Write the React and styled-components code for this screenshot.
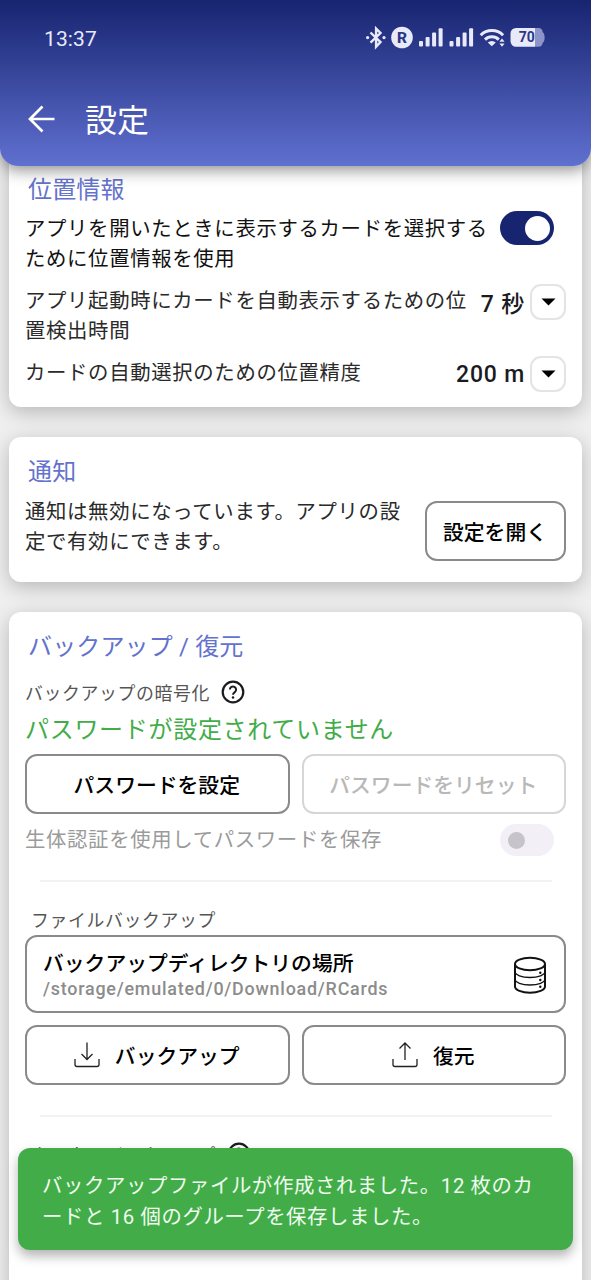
import styled, { createGlobalStyle, css } from "styled-components";

const App = () => {
  return (
    <Screen>
      <GlobalStyle />
      <Header>
        <StatusBar>
          <Clock>13:37</Clock>
          <StatusIcons />
        </StatusBar>
        <TitleBar>
          <BackArrow />
          <h1>設定</h1>
        </TitleBar>
      </Header>

      <Content>
        <Card>
          <Heading>位置情報</Heading>
          <Row $top={6}>
            <Text $strong>
              アプリを開いたときに表示するカードを選択するために位置情報を使用
            </Text>
            <Toggle $on />
          </Row>
          <Row $top={12}>
            <Text>
              アプリ起動時にカードを自動表示するための位置検出時間
            </Text>
            <Select value="7 秒" />
          </Row>
          <Row $top={12}>
            <Text>カードの自動選択のための位置精度</Text>
            <Select value="200 m" />
          </Row>
        </Card>

        <Card>
          <Heading>通知</Heading>
          <Row $top={7}>
            <Text>
              通知は無効になっています。アプリの設定で有効にできます。
            </Text>
            <OpenButton>設定を開く</OpenButton>
          </Row>
        </Card>

        <Card $last>
          <Heading>バックアップ / 復元</Heading>
          <Label $top={15}>
            バックアップの暗号化
            <HelpIcon />
          </Label>
          <Status>パスワードが設定されていません</Status>
          <ButtonRow $top={6}>
            <Button>パスワードを設定</Button>
            <Button disabled>パスワードをリセット</Button>
          </ButtonRow>
          <Row $top={10}>
            <Text $muted>生体認証を使用してパスワードを保存</Text>
            <Toggle />
          </Row>
          <Divider $top={24} />
          <Label $top={25} $indent>
            ファイルバックアップ
          </Label>
          <Directory>
            <div>
              <DirectoryTitle>バックアップディレクトリの場所</DirectoryTitle>
              <DirectoryPath>/storage/emulated/0/Download/RCards</DirectoryPath>
            </div>
            <DatabaseIcon />
          </Directory>
          <ButtonRow $top={12}>
            <Button>
              <DownloadIcon />
              バックアップ
            </Button>
            <Button>
              <UploadIcon />
              復元
            </Button>
          </ButtonRow>
          <Divider $top={30} />
          <Label $top={25} $indent>
            クラウドバックアップ
            <HelpIcon />
          </Label>
        </Card>
      </Content>

      <Toast>
        バックアップファイルが作成されました。12 枚のカードと 16
        個のグループを保存しました。
      </Toast>
    </Screen>
  );
};

const Toggle = ({ $on }) => (
  <Track $on={$on}>
    <Knob $on={$on} />
  </Track>
);

const Select = ({ value }) => (
  <SelectWrap>
    <span>{value}</span>
    <Caret>
      <svg width="15" height="8" viewBox="0 0 15 8">
        <path d="M0.5 0.5h14L7.5 7.5z" fill="#000" />
      </svg>
    </Caret>
  </SelectWrap>
);

const StatusIcons = () => (
  <svg width="180" height="24" viewBox="365 26 180 24" fill="#e8eafa">
    {/* bluetooth */}
    <path
      d="M370.5 32.5l10 9.6-4.4 4.6V28.6l4.4 4.4-10 9.6"
      fill="none"
      stroke="#e8eafa"
      strokeWidth="2.4"
    />
    <circle cx="367.6" cy="37.6" r="1.6" />
    <circle cx="384" cy="37.6" r="1.6" />
    {/* registered badge */}
    <circle cx="402" cy="37.5" r="10.8" />
    <text
      x="402"
      y="43"
      textAnchor="middle"
      fontFamily="Roboto"
      fontWeight="800"
      fontSize="15.5"
      fill="#2b3784"
    >
      R
    </text>
    {/* signal bars */}
    {[419, 449.5].map((x) => (
      <g key={x}>
        <rect x={x} y="41" width="4" height="5.5" rx="1" />
        <rect x={x + 6.6} y="37" width="4" height="9.5" rx="1" />
        <rect x={x + 13.1} y="32.5" width="4" height="14" rx="1" />
        <rect x={x + 19.6} y="28.3" width="4" height="18.2" rx="1" />
      </g>
    ))}
    {/* wifi */}
    <g fill="none" stroke="#e8eafa" strokeWidth="3">
      <path d="M480.7 35.2a15.8 15.8 0 0 1 22.4 0" />
      <path d="M485 39.6a9.8 9.8 0 0 1 13.8 0" />
    </g>
    <path d="M487.8 42.6a5.8 5.8 0 0 1 8 0l-4 3.7z" />
    <path d="M502 38.4l2.6 3.4h-5.2zM502 46.8l2.6-3.4h-5.2z" />
    {/* battery */}
    <path
      d="M535 28h3.5a4.5 4.5 0 0 1 4.2 4.2c2.6 1.4 2.6 9.2 0 10.6a4.5 4.5 0 0 1-4.2 4H535z"
      fill="#8c94ca"
    />
    <path d="M516 28h19v18.8h-19a5.5 5.5 0 0 1-5.5-5.5v-7.8a5.5 5.5 0 0 1 5.5-5.5z" />
    <text
      x="526.8"
      y="42.4"
      textAnchor="middle"
      fontFamily="Roboto"
      fontWeight="700"
      fontSize="14"
      fill="#2b3784"
    >
      70
    </text>
  </svg>
);

const BackArrow = () => (
  <svg width="30" height="30" viewBox="0 0 30 30">
    <path
      d="M27.5 15H3M15.5 2.5L3 15l12.5 12.5"
      fill="none"
      stroke="#fff"
      strokeWidth="2.7"
    />
  </svg>
);

const HelpIcon = () => (
  <HelpSvg width="24" height="24" viewBox="0 0 24 24">
    <circle cx="12" cy="12" r="10.3" fill="none" stroke="#1b1b1f" strokeWidth="2.2" />
    <path
      d="M8.9 9.6a3.1 3.1 0 1 1 4.9 2.5c-1.1.8-1.8 1.4-1.8 2.7"
      fill="none"
      stroke="#1b1b1f"
      strokeWidth="2"
    />
    <circle cx="12" cy="17.4" r="1.25" fill="#1b1b1f" />
  </HelpSvg>
);

const DatabaseIcon = () => (
  <svg width="34" height="38" viewBox="0 0 34 38" fill="none" stroke="#111">
    <ellipse cx="17" cy="8" rx="15" ry="6.2" strokeWidth="2" />
    <path d="M2 8v22.5c0 3.5 6.7 6.2 15 6.2s15-2.7 15-6.2V8" strokeWidth="2" />
    <path
      d="M2 15.5c0 3.4 6.7 6 15 6s15-2.6 15-6M2 23c0 3.4 6.7 6 15 6s15-2.6 15-6"
      strokeWidth="1.3"
    />
    <g fill="#111" stroke="none">
      <circle cx="27.3" cy="16.8" r="1.2" />
      <circle cx="27.3" cy="24" r="1.2" />
      <circle cx="27.3" cy="30.8" r="1.2" />
    </g>
  </svg>
);

const DownloadIcon = () => (
  <svg width="26" height="26" viewBox="0 0 26 26" fill="none" stroke="#222" strokeWidth="1.3">
    <path d="M13 0.5v17M7.5 12l5.5 5.5 5.5-5.5" />
    <path d="M1 17v5.5a2 2 0 0 0 2 2h20a2 2 0 0 0 2-2V17" />
  </svg>
);

const UploadIcon = () => (
  <svg width="26" height="26" viewBox="0 0 26 26" fill="none" stroke="#222" strokeWidth="1.3">
    <path d="M13 18V1M7.5 6.5L13 1l5.5 5.5" />
    <path d="M1 17v5.5a2 2 0 0 0 2 2h20a2 2 0 0 0 2-2V17" />
  </svg>
);

const GlobalStyle = createGlobalStyle`
  * {
    box-sizing: border-box;
  }
  body {
    margin: 0;
    background: #efefef;
    font-family: Roboto, "Noto Sans CJK JP", sans-serif;
    overflow: hidden;
  }
`;

const Screen = styled.div`
  position: relative;
  height: 1280px;
  overflow: hidden;
  display: flex;
  flex-direction: column;
`;

const Header = styled.header`
  position: relative;
  z-index: 2;
  flex: none;
  height: 166px;
  border-radius: 0 0 18px 18px;
  background: linear-gradient(#172470, #6070d0);
  box-shadow: 0 4px 16px rgba(0, 0, 0, 0.45);
  color: #fff;
`;

const StatusBar = styled.div`
  display: flex;
  justify-content: space-between;
  align-items: center;
  height: 76px;
  padding: 0 46px 0 44px;
`;

const Clock = styled.span`
  margin-top: 2px;
  font-size: 21px;
  letter-spacing: 0.1px;
  color: #e8eafa;
`;

const TitleBar = styled.div`
  display: flex;
  align-items: center;
  gap: 28px;
  height: 86px;
  padding-left: 27px;
  h1 {
    margin: 4px 0 0;
    font-size: 32px;
    font-weight: 400;
    line-height: 40px;
  }
`;

const Content = styled.main`
  display: flex;
  flex-direction: column;
  gap: 30px;
  flex: 1;
  margin-top: -11px;
  padding: 0 9px;
`;

const Card = styled.section`
  flex: none;
  padding: 17px 16px ${(p) => (p.$last ? 160 : 19)}px;
  border-radius: 12px;
  background: #fff;
  box-shadow: 0 5px 20px rgba(0, 0, 0, 0.24);
  &:nth-child(2) {
    padding-bottom: 16px;
  }
`;

const Heading = styled.h2`
  margin: 0 0 0 3px;
  font-size: 24px;
  font-weight: 400;
  letter-spacing: 0.15px;
  line-height: 36px;
  color: #6372cd;
`;

const Row = styled.div`
  display: flex;
  justify-content: space-between;
  align-items: flex-start;
  gap: 12px;
  margin-top: ${(p) => p.$top}px;
`;

const Text = styled.p`
  margin: ${(p) => (p.$muted ? "1px 0 -1px" : 0)};
  font-size: 20.4px;
  letter-spacing: 0.65px;
  line-height: 30px;
  line-break: loose;
  color: ${(p) => (p.$muted ? "#9b9b9b" : p.$strong ? "#111" : "#2a2a2a")};
`;

const Track = styled.div`
  flex: none;
  display: flex;
  align-items: center;
  justify-content: ${(p) => (p.$on ? "flex-end" : "flex-start")};
  width: 54px;
  height: ${(p) => (p.$on ? 34 : 32)}px;
  margin: ${(p) => (p.$on ? -3 : 0)}px 12px 0 0;
  padding: 0 ${(p) => (p.$on ? 4 : 8)}px;
  border-radius: 17px;
  background: ${(p) => (p.$on ? "#172470" : "#f3eff6")};
`;

const Knob = styled.div`
  width: ${(p) => (p.$on ? 25 : 17)}px;
  height: ${(p) => (p.$on ? 25 : 17)}px;
  border-radius: 50%;
  background: ${(p) => (p.$on ? "#fff" : "#c6c3c9")};
`;

const SelectWrap = styled.div`
  flex: none;
  display: flex;
  align-items: center;
  gap: 5px;
  height: 36px;
  margin: -2px 0 -5px;
  font-size: 23px;
  font-weight: 500;
  letter-spacing: 0.8px;
  color: #1b1b1f;
`;

const Caret = styled.div`
  display: flex;
  align-items: center;
  justify-content: center;
  width: 36px;
  height: 36px;
  border: 2px solid #e4e4e4;
  border-radius: 11px;
`;

const buttonBase = css`
  border: 2px solid #8a8a8a;
  border-radius: 12px;
  background: #fff;
`;

const Button = styled.button`
  ${buttonBase}
  flex: 1;
  display: flex;
  align-items: center;
  justify-content: center;
  gap: 15px;
  height: 60px;
  padding: 0 1px 0 0;
  font-family: inherit;
  font-size: 20.8px;
  font-weight: 500;
  color: #000;
  &:disabled {
    border-color: #d6d6d6;
    color: #b8b8b8;
  }
`;

const OpenButton = styled(Button)`
  flex: none;
  width: 141px;
  margin: 4px 0 5px;
`;

const ButtonRow = styled.div`
  display: flex;
  gap: 12px;
  margin-top: ${(p) => p.$top}px;
`;

const Label = styled.div`
  display: flex;
  align-items: center;
  gap: 11px;
  height: 24px;
  margin: ${(p) => p.$top}px 0 0 ${(p) => (p.$indent ? 6 : 0)}px;
  font-size: 17.9px;
  letter-spacing: 0.6px;
  color: #555;
`;

const HelpSvg = styled.svg`
  flex: none;
  margin-bottom: 1px;
`;

const Status = styled.p`
  margin: 8px 0 0;
  font-size: 24px;
  letter-spacing: 0.7px;
  line-height: 36px;
  color: #42ad48;
`;

const Divider = styled.hr`
  height: 2px;
  margin: ${(p) => p.$top}px 14px 0 15px;
  border: 0;
  background: #f3f3f3;
`;

const Directory = styled.div`
  ${buttonBase}
  display: flex;
  align-items: center;
  justify-content: space-between;
  height: 78px;
  margin-top: 4px;
  padding: 2px 17px 0 16px;
`;

const DirectoryTitle = styled.div`
  font-size: 20.8px;
  font-weight: 500;
  line-height: 28px;
  color: #000;
`;

const DirectoryPath = styled.div`
  font-size: 17.9px;
  font-weight: 500;
  letter-spacing: 0.78px;
  line-height: 22px;
  color: #8c8c8c;
`;

const Toast = styled.div`
  position: absolute;
  z-index: 3;
  left: 18px;
  right: 18px;
  bottom: 30px;
  height: 102px;
  padding: 23px 25px 0 24px;
  border-radius: 12px;
  background: #42ad48;
  box-shadow: 0 6px 12px rgba(0, 0, 0, 0.3);
  font-size: 20.4px;
  letter-spacing: 0.6px;
  line-height: 30.5px;
  line-break: loose;
  color: #effcef;
`;

export default App;
